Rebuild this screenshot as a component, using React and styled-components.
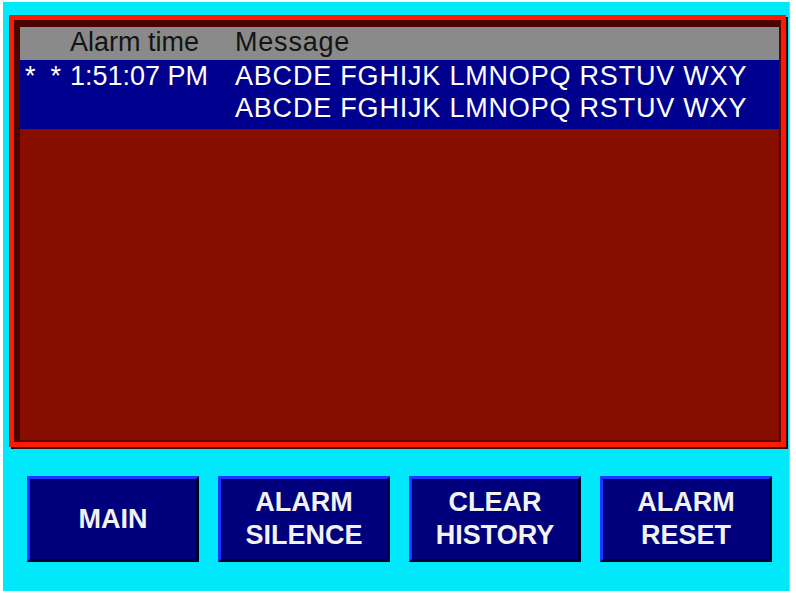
import styled, { createGlobalStyle } from 'styled-components';

const GlobalStyle = createGlobalStyle`
	html, body {
		margin: 0;
		padding: 0;
		background: #ffffff;
	}
	* {
		box-sizing: border-box;
	}
`;

const Page = styled.div`
	width: 796px;
	height: 593px;
	background: #ffffff;
	padding: 2px 0 0 3px;
	overflow: hidden;
`;

const Screen = styled.div`
	width: 787px;
	height: 589px;
	background: #00e8fa;
	border-right: 1px solid #f0a8a8;
	padding-top: 13px;
	display: flex;
	flex-direction: column;
	font-family: 'Liberation Sans', Arial, sans-serif;
`;

const AlarmPanel = styled.div`
	width: 777px;
	height: 432px;
	margin-left: 6px;
	border: 5px solid #ff1a00;
	box-shadow: 2px 2px 0 #3c0000;
	display: flex;
`;

const PanelInner = styled.div`
	flex: 1;
	display: flex;
	flex-direction: column;
	background: #880e00;
	border-style: solid;
	border-width: 7px 2px 2px 6px;
	border-color: #4a0400 #5c0500 #5c0500 #4a0400;
`;

const Row = styled.div`
	display: grid;
	grid-template-columns: 50px 165px 1fr;
	font-size: 27px;
	line-height: ${(p) => (p.$header ? '31px' : '32px')};
	color: ${(p) => (p.$header ? '#141414' : '#ffffff')};
	background: ${(p) => (p.$header ? '#8a8a8a' : '#00008e')};
	height: ${(p) => (p.$header ? '33px' : 'auto')};
	padding: ${(p) => (p.$header ? '0' : '0 0 5px 0')};
	white-space: nowrap;
`;

const Stars = styled.div`
	padding-left: 5px;
	white-space: pre;
`;

const Cell = styled.div`
	display: flex;
	flex-direction: column;
	letter-spacing: ${(p) => (p.$wide ? '0.8px' : '0')};
`;

const ButtonRow = styled.div`
	display: flex;
	gap: 19px;
	padding-left: 24px;
	margin-top: 29px;
`;

const PanelButton = styled.button`
	width: 172px;
	height: 86px;
	background: #00007c;
	border-style: solid;
	border-width: 3px;
	border-color: #1838ff #00002c #00002c #1838ff;
	color: #f2f2f2;
	font-family: 'Liberation Sans', Arial, sans-serif;
	font-weight: bold;
	font-size: 27px;
	line-height: 33px;
	padding: 0;
	display: flex;
	flex-direction: column;
	align-items: center;
	justify-content: center;
`;

const buttons = [['MAIN'], ['ALARM', 'SILENCE'], ['CLEAR', 'HISTORY'], ['ALARM', 'RESET']];

const alarms = [
	{
		flags: '*  *',
		time: '1:51:07 PM',
		lines: ['ABCDE FGHIJK LMNOPQ RSTUV WXY', 'ABCDE FGHIJK LMNOPQ RSTUV WXY'],
	},
];

function App() {
	return (
		<Page>
			<GlobalStyle />
			<Screen>
				<AlarmPanel>
					<PanelInner>
						<Row $header>
							<Stars />
							<Cell>Alarm time</Cell>
							<Cell $wide>Message</Cell>
						</Row>
						{alarms.map((a, i) => (
							<Row key={i}>
								<Stars>{a.flags}</Stars>
								<Cell>{a.time}</Cell>
								<Cell $wide>
									{a.lines.map((l, j) => (
										<span key={j}>{l}</span>
									))}
								</Cell>
							</Row>
						))}
					</PanelInner>
				</AlarmPanel>
				<ButtonRow>
					{buttons.map((b, i) => (
						<PanelButton key={i}>
							{b.map((t) => (
								<span key={t}>{t}</span>
							))}
						</PanelButton>
					))}
				</ButtonRow>
			</Screen>
		</Page>
	);
}

export default App;
